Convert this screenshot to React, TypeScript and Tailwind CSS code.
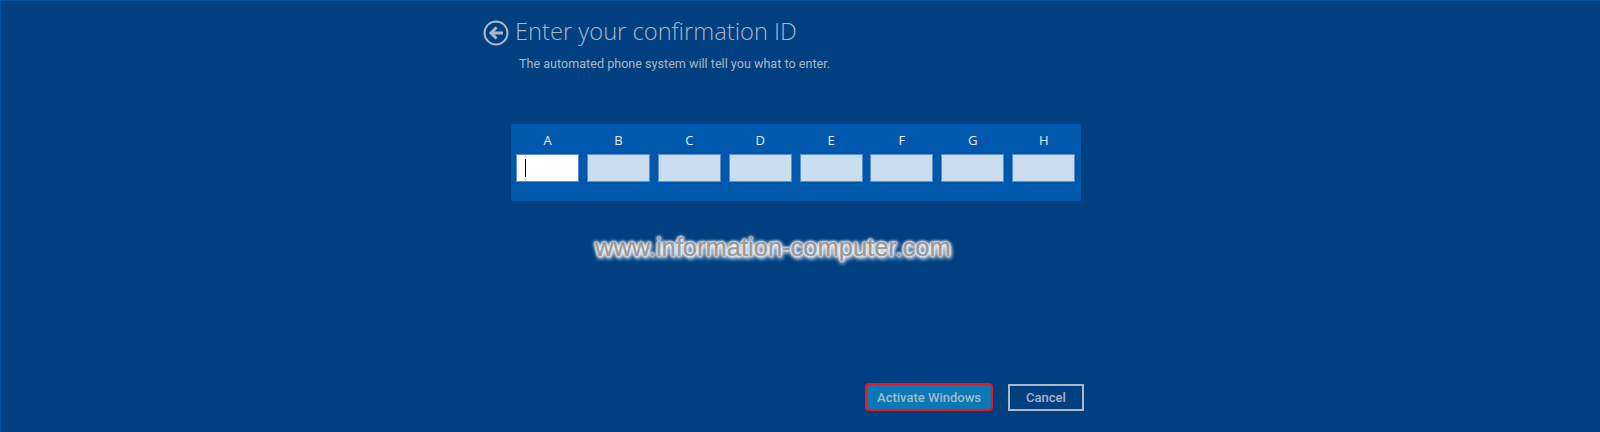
const segments = ['A', 'B', 'C', 'D', 'E', 'F', 'G', 'H'];

function BackIcon() {
  return (
    <svg width="26" height="26" viewBox="0 0 26 26" fill="none" className="shrink-0">
      <circle cx="13" cy="13" r="11.5" stroke="#adb8c7" strokeWidth="2" />
      <path d="M20 13H8.5" stroke="#adb8c7" strokeWidth="3" />
      <path d="M13.5 7.5L8 13l5.5 5.5" stroke="#adb8c7" strokeWidth="3" />
    </svg>
  );
}

export default function App() {
  return (
    <div className="h-[432px] w-[1600px] overflow-hidden bg-[#004080] border-t border-l border-[#00509c] pl-[482px] font-['Roboto','Open_Sans',sans-serif]">
      <div className="flex h-full w-[610px] flex-col">
        <div className="mt-[19px] flex h-[26px] items-center gap-[6px]">
          <BackIcon />
          <h1 className="-mt-[3px] font-['Open_Sans',sans-serif] text-[23.7px] font-light leading-none text-[#a9b6c7]">Enter your confirmation ID</h1>
        </div>
        <p className="ml-[36px] mt-[9px] text-[12.6px] leading-[18px] text-[#a9b6c7]">
          The automated phone system will tell you what to enter.
        </p>

        <div className="ml-[28px] mt-[51px] h-[77px] w-[570px] rounded-[3px] bg-[#0058ad] pl-[5px] pr-[5px] pt-[7px]">
          <div className="flex gap-[7.9px]">
            {segments.map((s, i) => (
              <div key={s} className="flex w-[63px] flex-col items-center">
                <span className="h-[23px] font-['Open_Sans',sans-serif] text-[13px] leading-[18px] text-[#e6edf5]">{s}</span>
                <div className={`flex h-[28px] w-full items-center border border-[#5f8fc6] px-[8px] ${i === 0 ? 'bg-white' : 'bg-[#cbdef0]'}`}>
                  {i === 0 && <div className="h-[18px] w-px bg-black" />}
                </div>
              </div>
            ))}
          </div>
        </div>

        <div className="ml-[112px] mt-[32px] font-['Liberation_Sans',sans-serif] text-[25.5px] leading-[28px] text-[#9a9a9a] [-webkit-text-stroke:0.5px_#9a9a9a] [text-shadow:0_0_1px_#fff,0_0_2px_#fff,0_0_3px_#fff,0_0_3px_#fff,0_0_4px_#fff,1px_2px_4px_#fff,1px_2px_5px_#fff]">
          www.information-computer.com
        </div>

        <div className="ml-[382px] mt-[122px] flex items-end gap-[15px]">
          <button className="h-[28px] w-[128px] rounded-[4px] border-2 border-[#f5101c] bg-[#0a78b5] pt-[1px] text-[13px] font-medium text-[#a3b8c8]">
            Activate Windows
          </button>
          <button className="h-[27px] w-[76px] border-2 border-[#adb8c7] pt-[1px] text-[13px] font-medium text-[#a9b6c7]">
            Cancel
          </button>
        </div>
      </div>
    </div>
  );
}
